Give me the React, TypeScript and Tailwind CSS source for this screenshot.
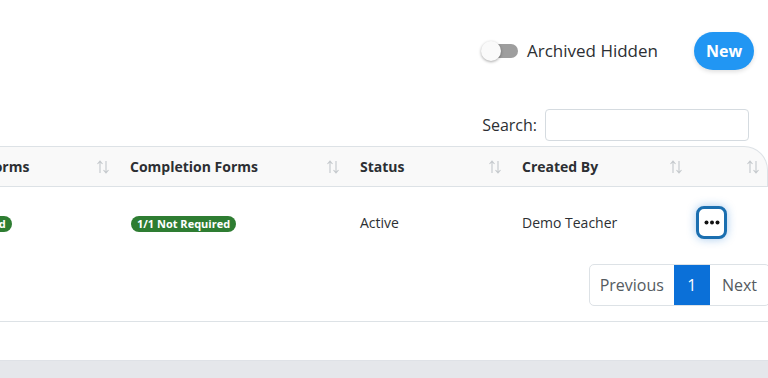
import { useState } from "react";

function SortIcon() {
  return (
    <svg width="14" height="14" viewBox="0 0 14 14" fill="none" className="shrink-0">
      <path d="M4 13V1.5M1.5 4L4 1.2L6.5 4" stroke="#c4c8cc" strokeWidth="1.1" />
      <path d="M10 1V12.5M7.5 10L10 12.8L12.5 10" stroke="#c4c8cc" strokeWidth="1.1" />
    </svg>
  );
}

function HeaderCell({ label }: { label: string }) {
  return (
    <div className="flex items-center justify-between pl-3 pr-2">
      <span className="font-bold text-[14px] text-[#2c2f33] whitespace-nowrap">{label}</span>
      <SortIcon />
    </div>
  );
}

function Badge({ text }: { text: string }) {
  return (
    <span className="inline-flex items-center h-[16px] rounded-full bg-[#2e7d32] px-[6px] text-[11px] font-bold text-white whitespace-nowrap leading-none">
      {text}
    </span>
  );
}

export default function App() {
  const [archived, setArchived] = useState(false);

  return (
    <div className="w-[768px] h-[378px] overflow-hidden bg-white flex flex-col font-['Open_Sans',sans-serif] text-[#2c2f33]">
      {/* top actions */}
      <div className="flex items-center justify-end pt-8 pr-[14px]">
        <button
          onClick={() => setArchived(!archived)}
          className="flex items-center gap-[9px]"
        >
          <span className="relative flex items-center w-[37px] h-[20px]">
            <span className="absolute left-[1px] right-0 h-[14px] rounded-full bg-[#9e9e9e]" />
            <span className="absolute left-0 w-[20px] h-[20px] rounded-full bg-[#fafafa] shadow-[0_1px_3px_rgba(0,0,0,0.35)]" />
          </span>
          <span className="text-[17px] text-[#2c2f33]">Archived Hidden</span>
        </button>
        <button className="ml-9 h-[38px] w-[60px] rounded-full bg-[#2196f3] text-white font-bold text-[16px] shadow-[0_2px_4px_rgba(0,0,0,0.12)]">
          New
        </button>
      </div>

      {/* search */}
      <div className="flex items-center justify-end mt-[39px] pr-[19px]">
        <label className="text-[16px] text-[#2c2f33] mr-2">Search:</label>
        <input className="w-[204px] h-[32px] rounded-[4px] border border-[#d5dbe0] outline-none px-2" />
      </div>

      {/* table, scrolled sideways */}
      <div className="mt-[5px] ml-[-93px] w-[861px]">
        <div className="grid grid-cols-[211px_230px_162px_181px_77px] h-[41px] bg-[#f9f9f9] border-t border-r border-b border-[#dde2e6] rounded-tr-[24px]">
          <HeaderCell label="Required Forms" />
          <HeaderCell label="Completion Forms" />
          <HeaderCell label="Status" />
          <HeaderCell label="Created By" />
          <div className="flex items-center justify-end pr-2">
            <SortIcon />
          </div>
        </div>
        <div className="grid grid-cols-[211px_230px_162px_181px_77px] h-[71px] items-center text-[14px]">
          <div className="pl-[13px]">
            <Badge text="1/1 Completed" />
          </div>
          <div className="pl-[13px]">
            <Badge text="1/1 Not Required" />
          </div>
          <div className="pl-3">Active</div>
          <div className="pl-3">Demo Teacher</div>
          <div className="pl-[5px]">
            <button className="flex items-center justify-center w-[31px] h-[33px] rounded-[8px] border-[3px] border-[#1b6fb0] bg-white shadow-[0_0_10px_rgba(33,120,210,0.4)]">
              <svg width="16" height="5" viewBox="0 0 16 5">
                <circle cx="2.5" cy="2.5" r="2" fill="#111" />
                <circle cx="8" cy="2.5" r="2" fill="#111" />
                <circle cx="13.5" cy="2.5" r="2" fill="#111" />
              </svg>
            </button>
          </div>
        </div>
      </div>

      {/* pagination */}
      <div className="flex justify-end mt-[6px] mr-[-2px]">
        <div className="flex h-[42px] rounded-[5px] border border-[#dde2e6] overflow-hidden text-[16px]">
          <button className="px-[10px] text-[#555b61]">Previous</button>
          <button className="w-[36px] bg-[#0b70d8] text-white">1</button>
          <button className="px-3 text-[#555b61]">Next</button>
        </div>
      </div>

      <div className="mt-[15px] border-b border-[#dde2e6]" />
      <div className="flex-1" />
      <div className="h-[18px] bg-[#e5e7eb] border-t border-[#dfe2e7]" />
    </div>
  );
}
